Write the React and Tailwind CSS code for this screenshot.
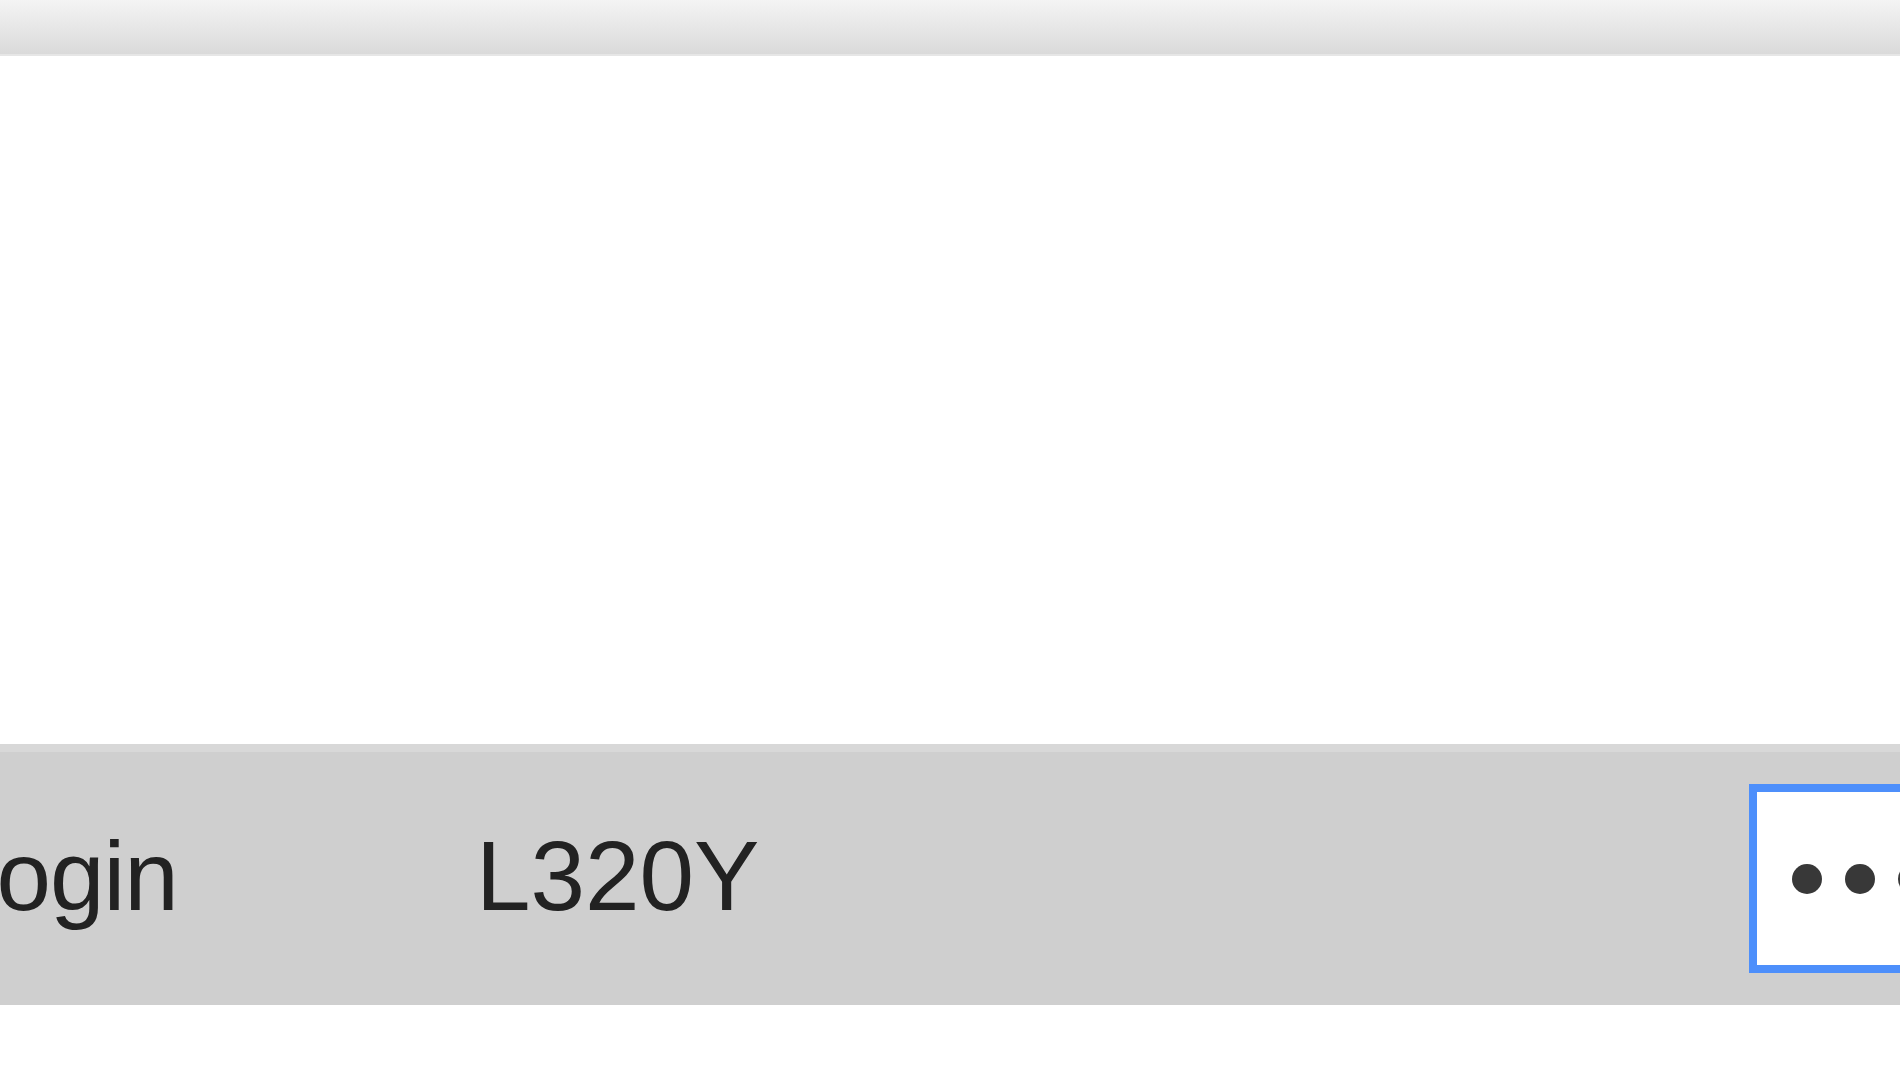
export default function App() {
  return (
    <div className="h-[1069px] w-full overflow-hidden bg-white flex flex-col" style={{ fontFamily: '"Liberation Sans", Arial, sans-serif' }}>
      <header className="h-[56px] shrink-0 bg-gradient-to-b from-[#f4f4f4] to-[#dadada] border-b-2 border-[#e6e6e6]" />

      <div className="h-[688px] shrink-0 bg-white" />

      <section className="h-[261px] shrink-0 border-t-[8px] border-[#d8d8d8] bg-[#cfcfcf] flex items-center overflow-hidden">
        <div className="w-[533px] shrink-0 ml-[-57px] pb-[5px] text-[98px] leading-none tracking-[-1px] text-[#222]">Login</div>
        <div className="flex-1 pb-[5px] text-[98px] leading-none text-[#222]">L320Y</div>
        <div className="w-[400px] shrink-0 mr-[-249px] h-[189px] border-[8px] border-[#4d8ffb] bg-white flex items-center gap-[23px] pl-[35px]">
          <span className="w-[30px] h-[30px] shrink-0 rounded-full bg-[#383838]" />
          <span className="w-[30px] h-[30px] shrink-0 rounded-full bg-[#383838]" />
          <span className="w-[30px] h-[30px] shrink-0 rounded-full bg-[#383838]" />
          <span className="w-[30px] h-[30px] shrink-0 rounded-full bg-[#383838]" />
        </div>
      </section>

      <div className="flex-1 bg-white" />
    </div>
  )
}
